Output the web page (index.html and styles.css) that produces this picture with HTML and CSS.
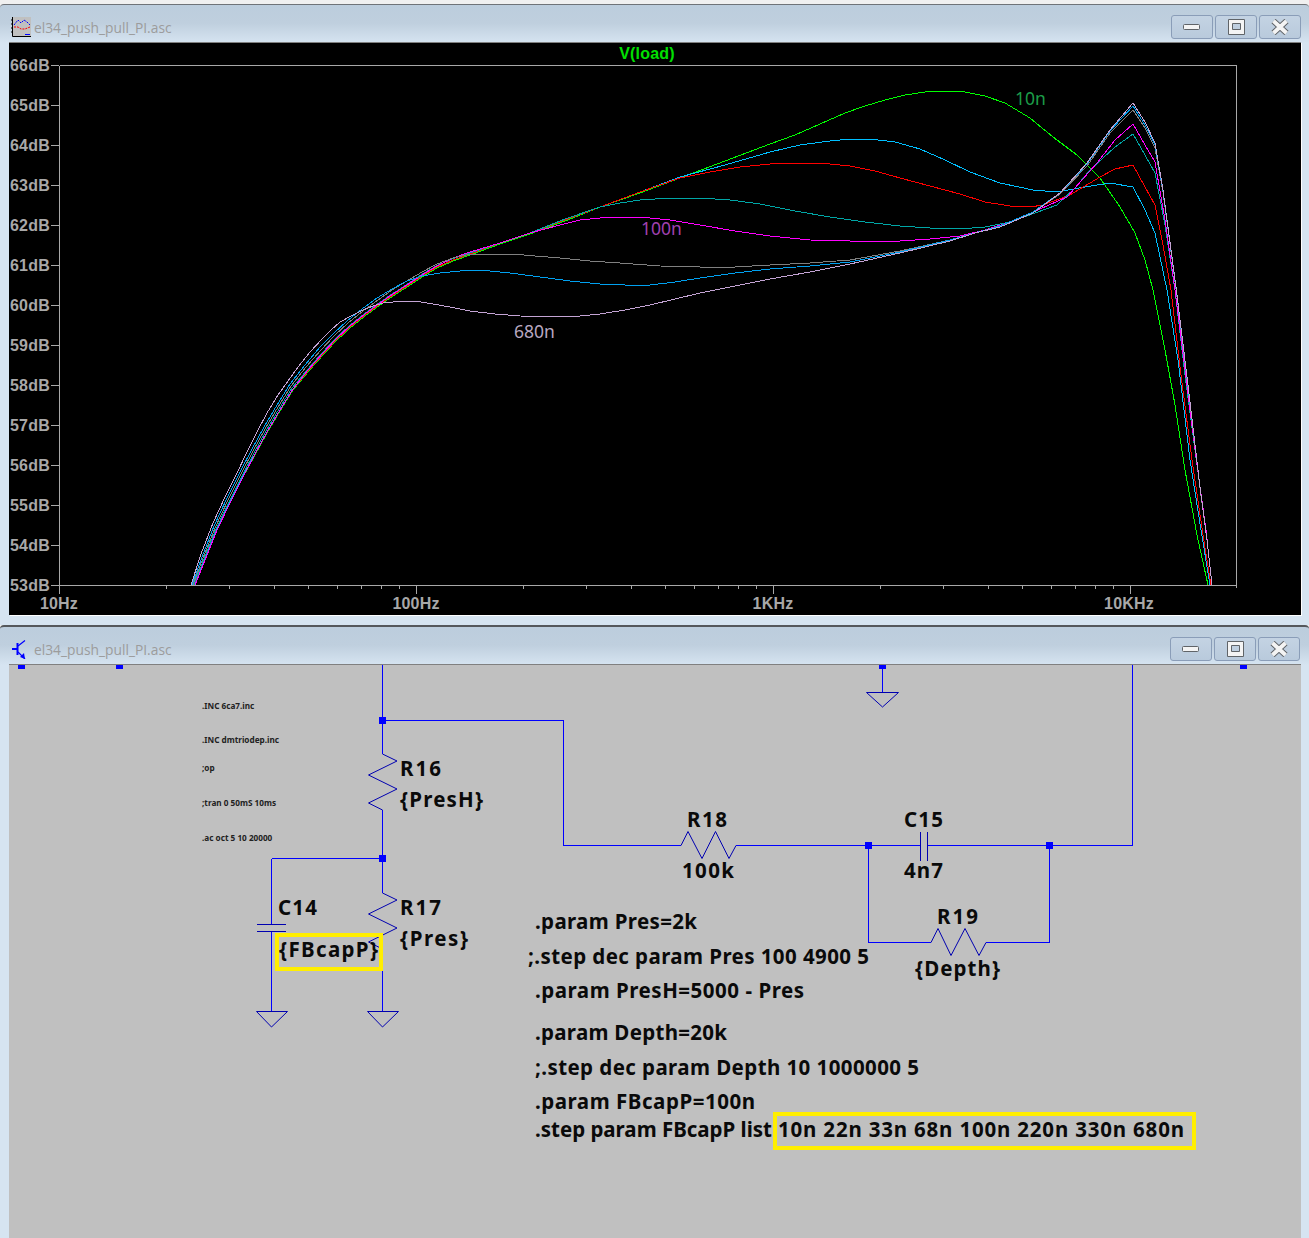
FILE: index.html
```html
<!DOCTYPE html>
<html lang="en">
<head>
<meta charset="utf-8">
<title>el34_push_pull_PI.asc</title>
<link rel="stylesheet" href="styles.css">
</head>
<body>
<main class="desktop">
  <section class="window window-plot">
    <header class="titlebar">
      <svg class="app-icon" viewBox="0 0 20 20" width="20" height="20" aria-hidden="true">
        <rect x="1" y="0" width="19" height="19" fill="#c0c0c0"/>
        <path d="M1.500 0V19.500H20" fill="none" stroke="#000"/>
        <path d="M0 3H1M0 7H1M0 11H1M0 15H1M5 20V19M9 20V19M13 20V19M17 20V19" stroke="#000"/>
        <path d="M3 8L7 3L10 6L13 3L16 5L19 8" fill="none" stroke="#0000ff" stroke-dasharray="2 1"/>
        <path d="M3 10H7L10 12H14L19 10" fill="none" stroke="#ff0000" stroke-dasharray="2 1"/>
        <path d="M14 17.500H19" stroke="#0000ff"/>
      </svg>
      <h1 class="title">el34_push_pull_PI.asc</h1>
      <div class="controls">
        <button class="ctl" type="button" aria-label="Minimize"><svg viewBox="0 0 20 16" width="20" height="16"><rect class="glyph" x="1.500" y="5.500" width="16" height="5" rx="1"/></svg></button>
        <button class="ctl" type="button" aria-label="Maximize"><svg viewBox="0 0 20 16" width="20" height="16"><path class="glyph" fill-rule="evenodd" d="M2.500 .5H18.500V15.500H2.500ZM6.500 4.500V10.500H14.500V4.500Z"/></svg></button>
        <button class="ctl" type="button" aria-label="Close"><svg viewBox="0 0 20 16" width="20" height="16"><path class="x-edge" d="M3.500 2L16.500 14M16.500 2L3.500 14"/><path class="x-fill" d="M3.500 2L16.500 14M16.500 2L3.500 14"/></svg></button>
      </div>
    </header>
    <div class="client client-plot">
      <svg class="canvas" viewBox="9 43 1292 572" width="1292" height="572">
        <path class="axis" d="M59.500 65.500H1236.500V588M59.500 65.500V594M51 585.500H1236.500M51 65.500H59M51 105.500H59M51 145.500H59M51 185.500H59M51 225.500H59M51 265.500H59M51 305.500H59M51 345.500H59M51 385.500H59M51 425.500H59M51 465.500H59M51 505.500H59M51 545.500H59"/>
        <path class="axis" d="M166.500 585V589M229.500 585V589M274.500 585V589M308.500 585V589M337.500 585V589M361.500 585V589M381.500 585V589M399.500 585V589M416.500 585V594M523.500 585V589M586.500 585V589M631.500 585V589M665.500 585V589M694.500 585V589M718.500 585V589M738.500 585V589M756.500 585V589M773.500 585V594M880.500 585V589M943.500 585V589M988.500 585V589M1022.500 585V589M1051.500 585V589M1075.500 585V589M1095.500 585V589M1113.500 585V589M1130.500 585V594"/>
        <g class="axis-labels">
          <text x="10" y="71">66dB</text><text x="10" y="111">65dB</text><text x="10" y="151">64dB</text><text x="10" y="191">63dB</text><text x="10" y="231">62dB</text><text x="10" y="271">61dB</text><text x="10" y="311">60dB</text><text x="10" y="351">59dB</text><text x="10" y="391">58dB</text><text x="10" y="431">57dB</text><text x="10" y="471">56dB</text><text x="10" y="511">55dB</text><text x="10" y="551">54dB</text><text x="10" y="591">53dB</text>
          <text class="mid" x="59" y="609">10Hz</text><text class="mid" x="416" y="609">100Hz</text><text class="mid" x="773" y="609">1KHz</text><text class="mid" x="1129" y="609">10KHz</text>
        </g>
        <text class="trace-name" x="647" y="59">V(load)</text>
        <g class="traces">
          <polyline class="t10" points="195,585 205,560 217,530 230,503 243,477 255,455 267,433 280,411 293,390 308,372 323,355 336,341 350,328 365,316 380,305 393,296 407,287 422,277 437,268 453,261 470,255 500,244 530,234 565,221 600,207 640,193 680,178 725,161 770,144 795,135 820,124 845,113 865,106 885,100 905,95 925,92 945,91 965,92 985,96 1005,103 1030,118 1053,137 1077,155 1100,178 1120,207 1135,233 1145,260 1153,290 1165,350 1175,405 1185,470 1197,535 1208,585"/>
          <polyline class="t22" points="195,585 205,559 217,529 230,502 243,476 255,454 267,432 280,410 293,389 308,371 323,354 336,340 350,327 365,315 380,304 393,295 407,286 422,276 437,267 453,260 470,254 500,243 530,233 565,220 600,207 640,192 680,177 725,165 770,152 800,145 830,141 850,139 870,139 895,142 920,149 945,160 970,172 1000,183 1033,190 1057,192 1085,187 1110,183 1133,187 1145,210 1155,233 1167,290 1178,360 1190,460 1201,530 1210,585"/>
          <polyline class="t33" points="195,585 205,560 217,530 230,503 243,477 255,454 267,432 280,410 293,389 308,371 323,354 336,340 350,327 365,315 380,304 393,295 407,286 422,276 437,267 453,260 470,254 500,243 530,233 565,220 600,207 640,192 680,178 710,172 740,167 770,164 800,163 830,164 850,166 875,171 900,178 930,186 960,194 985,202 1010,206 1030,207 1043,205 1070,195 1100,177 1115,169 1133,165 1145,187 1155,205 1163,245 1171,290 1181,375 1192,460 1203,535 1211,585"/>
          <polyline class="t68" points="194,585 204,559 216,529 229,502 242,476 254,453 266,431 279,409 292,388 307,370 322,353 335,339 349,326 364,314 379,303 392,294 406,285 421,275 436,266 452,259 470,253 500,243 530,233 565,219 600,207 620,203 640,200 670,198 700,198 730,200 760,204 795,211 830,217 865,222 900,226 930,228 960,229 985,227 1010,222 1035,213 1057,205 1075,188 1090,170 1115,147 1133,134 1145,155 1155,173 1165,225 1175,290 1185,375 1197,465 1206,530 1212,585"/>
          <polyline class="t100" points="195,585 205,560 217,530 230,503 243,477 255,454 267,432 280,410 293,389 308,370 323,353 336,339 350,326 365,314 380,303 393,294 407,285 422,275 437,266 453,258 470,252 500,243 530,233 560,225 580,220 600,218 620,217 640,217 670,220 700,225 735,231 770,236 810,240 850,241 900,241 930,239 960,236 985,230 1010,222 1040,209 1067,197 1082,180 1097,163 1115,140 1133,124 1145,145 1155,162 1165,220 1175,290 1185,370 1197,465 1206,530 1212,585"/>
          <polyline class="t220" points="193,585 203,558 215,528 228,500 241,474 253,451 265,429 278,407 291,386 306,367 321,350 334,336 348,323 363,311 378,300 392,290 407,281 422,272 437,264 453,258 470,254 490,254 512,254 535,256 560,258 590,261 620,263 660,266 700,267 735,267 770,265 810,263 850,260 900,251 950,240 975,233 1000,226 1033,212 1060,194 1087,166 1110,133 1133,110 1145,128 1155,148 1163,192 1176,289 1188,387 1200,488 1207,540 1212,585"/>
          <polyline class="t330" points="192,585 202,557 214,526 227,498 240,472 252,449 264,427 277,405 290,384 305,365 320,347 333,334 347,321 362,309 377,298 392,289 407,281 422,276 440,273 460,271 480,270 510,273 540,277 570,281 600,284 625,285 650,285 675,282 700,278 735,273 770,269 810,266 850,262 900,252 950,240 975,233 1000,226 1033,212 1060,193 1087,164 1110,131 1133,106 1145,125 1155,145 1163,191 1176,288 1188,386 1200,487 1207,540 1212,585"/>
          <polyline class="t680" points="191,585 201,554 213,523 225,497 237,473 247,452 257,432 267,413 278,395 288,381 298,367 310,352 323,338 331,330 340,322 351,316 363,310 373,306 383,303 393,302 403,301 415,301 433,304 450,307 470,311 495,314 520,316 555,317 580,316 600,314 625,310 650,305 675,299 700,293 735,286 770,279 810,272 850,264 900,253 950,241 975,233 1000,227 1033,213 1060,193 1087,163 1110,130 1133,103 1145,122 1155,143 1163,190 1176,287 1188,385 1200,487 1207,540 1212,585"/>
        </g>
        <text class="note note-green" x="1015" y="105">10n</text>
        <text class="note note-purple" x="641" y="235">100n</text>
        <text class="note note-grey" x="514" y="338">680n</text>
      </svg>
    </div>
  </section>

  <section class="window window-schematic">
    <header class="titlebar">
      <svg class="app-icon" viewBox="0 0 20 20" width="20" height="20" aria-hidden="true">
        <path d="M1 10H7M6.500 4V16" stroke="#0000ff" stroke-width="2" fill="none"/>
        <path d="M7 7L14 1.500M7 13L14 20" stroke="#0000ff" stroke-width="1.200" fill="none"/>
        <path d="M14 20L9 18L13 14Z" fill="#0000ff"/>
      </svg>
      <h1 class="title">el34_push_pull_PI.asc</h1>
      <div class="controls">
        <button class="ctl" type="button" aria-label="Minimize"><svg viewBox="0 0 20 16" width="20" height="16"><rect class="glyph" x="1.500" y="5.500" width="16" height="5" rx="1"/></svg></button>
        <button class="ctl" type="button" aria-label="Maximize"><svg viewBox="0 0 20 16" width="20" height="16"><path class="glyph" fill-rule="evenodd" d="M2.500 .5H18.500V15.500H2.500ZM6.500 4.500V10.500H14.500V4.500Z"/></svg></button>
        <button class="ctl" type="button" aria-label="Close"><svg viewBox="0 0 20 16" width="20" height="16"><path class="x-edge" d="M3.500 2L16.500 14M16.500 2L3.500 14"/><path class="x-fill" d="M3.500 2L16.500 14M16.500 2L3.500 14"/></svg></button>
      </div>
    </header>
    <div class="client client-schematic">
      <svg class="canvas" viewBox="9 665 1292 573" width="1292" height="573">
        <path class="wire" d="M382.500 665V754M382.500 720.500H563.500V845.500H681M736 845.500H920M927 845.500H1132.500V665M382.500 810V893M382.500 949V1011M271.500 858.500H382.500M271.500 858.500V924M271.500 931V1011M882.500 665V692M868.500 845.500V942.500H931M986 942.500H1049.500V845.500"/>
        <path class="part" d="M382.500 754L397 761L368.500 775L397 789L368.500 803L382.500 810"/>
        <path class="part" d="M382.500 893L397 900L368.500 914L397 928L368.500 942L382.500 949"/>
        <path class="part" d="M681 845.500L688 831.500L702 858.500L715.500 831.500L729 858.500L736 845.500"/>
        <path class="part" d="M931 942.500L938 928.500L951 955.500L965 928.500L979 955.500L986 942.500"/>
        <path class="part" d="M257 924.500H286M257 931.500H286M920.500 832V861M927.500 832V861"/>
        <path class="part" d="M256.500 1011.500H287.500L271.500 1027ZM367.500 1011.500H398.500L382.500 1027ZM866.500 692.500H898.500L882.500 707Z"/>
        <g class="dots">
          <rect x="379" y="717" width="7" height="7"/><rect x="379" y="855" width="7" height="7"/><rect x="865" y="842" width="7" height="7"/><rect x="1046" y="842" width="7" height="7"/>
          <rect x="18" y="665" width="7" height="4"/><rect x="116" y="665" width="7" height="4"/><rect x="879" y="665" width="7" height="4"/><rect x="1240" y="665" width="7" height="4"/>
        </g>
        <g class="small-text">
          <text x="202" y="709">.INC 6ca7.inc</text>
          <text x="202" y="743">.INC dmtriodep.inc</text>
          <text x="202" y="771">;op</text>
          <text x="202" y="806">;tran 0 50mS 10ms</text>
          <text x="202" y="841">.ac oct 5 10 20000</text>
        </g>
        <rect class="marker" x="277" y="935" width="104" height="34"/>
        <rect class="marker" x="775" y="1114" width="419" height="34"/>
        <g class="big-text">
          <text x="400" y="776" textLength="41">R16</text>
          <text x="400" y="807" textLength="83">{PresH}</text>
          <text x="400" y="915" textLength="41">R17</text>
          <text x="400" y="946" textLength="68">{Pres}</text>
          <text x="278" y="915" textLength="39">C14</text>
          <text x="279" y="957" textLength="99">{FBcapP}</text>
          <text x="687" y="827" textLength="40">R18</text>
          <text x="682" y="878" textLength="52">100k</text>
          <text x="904" y="827" textLength="39">C15</text>
          <text x="904" y="878" textLength="39">4n7</text>
          <text x="937" y="924" textLength="41">R19</text>
          <text x="915" y="976" textLength="85">{Depth}</text>
          <text x="535" y="929" textLength="162">.param Pres=2k</text>
          <text x="528" y="964" textLength="341">;.step dec param Pres 100 4900 5</text>
          <text x="535" y="998" textLength="269">.param PresH=5000 - Pres</text>
          <text x="535" y="1040" textLength="192">.param Depth=20k</text>
          <text x="535" y="1075" textLength="384">;.step dec param Depth 10 1000000 5</text>
          <text x="535" y="1109" textLength="220">.param FBcapP=100n</text>
          <text x="535" y="1137" textLength="237">.step param FBcapP list</text>
          <text x="778" y="1137" textLength="406">10n 22n 33n 68n 100n 220n 330n 680n</text>
        </g>
      </svg>
    </div>
  </section>
</main>
</body>
</html>
```
FILE: styles.css
```css
html, body { margin: 0; padding: 0; background: #f0f0f0; }
body { width: 1309px; height: 1238px; overflow: hidden; }

.desktop { display: flex; flex-direction: column; height: 1238px; padding-top: 4px; box-sizing: border-box; }

.window {
  box-sizing: border-box;
  border-top: 1px solid #6f7378;
  border-radius: 4px 4px 0 0;
  background: linear-gradient(#bccddd 0, #bfcfde 18px, #d6e4f1 38px);
  display: flex;
  flex-direction: column;
  padding: 0 8px 0 9px;
  overflow: hidden;
}
.window-plot { height: 621px; flex: none; }
.window-schematic { flex: 1; border-top: 2px solid #55585c; }

.titlebar { display: flex; align-items: center; height: 37px; box-sizing: border-box; padding-top: 7px; flex: none; margin-left: 2px; }
.app-icon { flex: none; margin-right: 3px; }
.title { margin: 0; font: 400 13.800px "Open Sans", "Noto Sans", sans-serif; color: #9c9c9c; flex: 1; }

.controls { display: flex; gap: 2px; align-self: flex-start; margin-top: 3px; }
.window-schematic .controls { margin-right: 1px; }
.ctl {
  box-sizing: border-box; width: 42px; height: 24px; padding: 0;
  display: flex; align-items: center; justify-content: center;
  border: 1px solid #8a9db8; border-radius: 3px;
  background: linear-gradient(#c4d3e3, #b9cadc);
}
.glyph { fill: #f4f4f4; stroke: #606468; stroke-width: 1; }
.x-edge { fill: none; stroke: #606468; stroke-width: 6; }
.x-fill { fill: none; stroke: #f4f4f4; stroke-width: 4; }

.client { flex: none; box-sizing: border-box; width: 1292px; border-top: 1px solid #808080; }
.client-plot { height: 573px; background: #000; box-shadow: 1px 1px 0 #fff; }
.client-schematic { height: 574px; background: #c0c0c0; }
.canvas { display: block; }

.axis { fill: none; stroke: #a8a8a8; stroke-width: 1; shape-rendering: crispEdges; }
.axis-labels text { font: 700 16px "Liberation Sans", Arial, sans-serif; letter-spacing: .2px; fill: #a8a8a8; }
.axis-labels .mid { text-anchor: middle; }
.trace-name { font: 700 16px "Liberation Sans", Arial, sans-serif; letter-spacing: .2px; fill: #00e000; text-anchor: middle; }

.traces polyline { fill: none; stroke-width: 1; shape-rendering: crispEdges; }
.t10 { stroke: #00ff00; }
.t22 { stroke: #00bfff; }
.t33 { stroke: #ff0000; }
.t68 { stroke: #00a6a6; }
.t100 { stroke: #ff00ff; }
.t220 { stroke: #808080; }
.t330 { stroke: #00a0f0; }
.t680 { stroke: #c4a4d4; }

.note { font: 400 17.500px "Noto Sans", sans-serif; }
.note-green { fill: #1c9c48; }
.note-purple { fill: #a040b0; }
.note-grey { fill: #b8a8c0; }

.wire { fill: none; stroke: #0000ff; stroke-width: 1; shape-rendering: crispEdges; }
.part { fill: none; stroke: #0000b0; stroke-width: 1; }
.dots rect { fill: #0000ff; }
.marker { fill: none; stroke: #ffee00; stroke-width: 4; }
.small-text text { font: 700 8.200px "Noto Sans", sans-serif; fill: #222; }
.big-text text { font: 700 20.500px "Noto Sans", sans-serif; fill: #0a0a0a; }
```
